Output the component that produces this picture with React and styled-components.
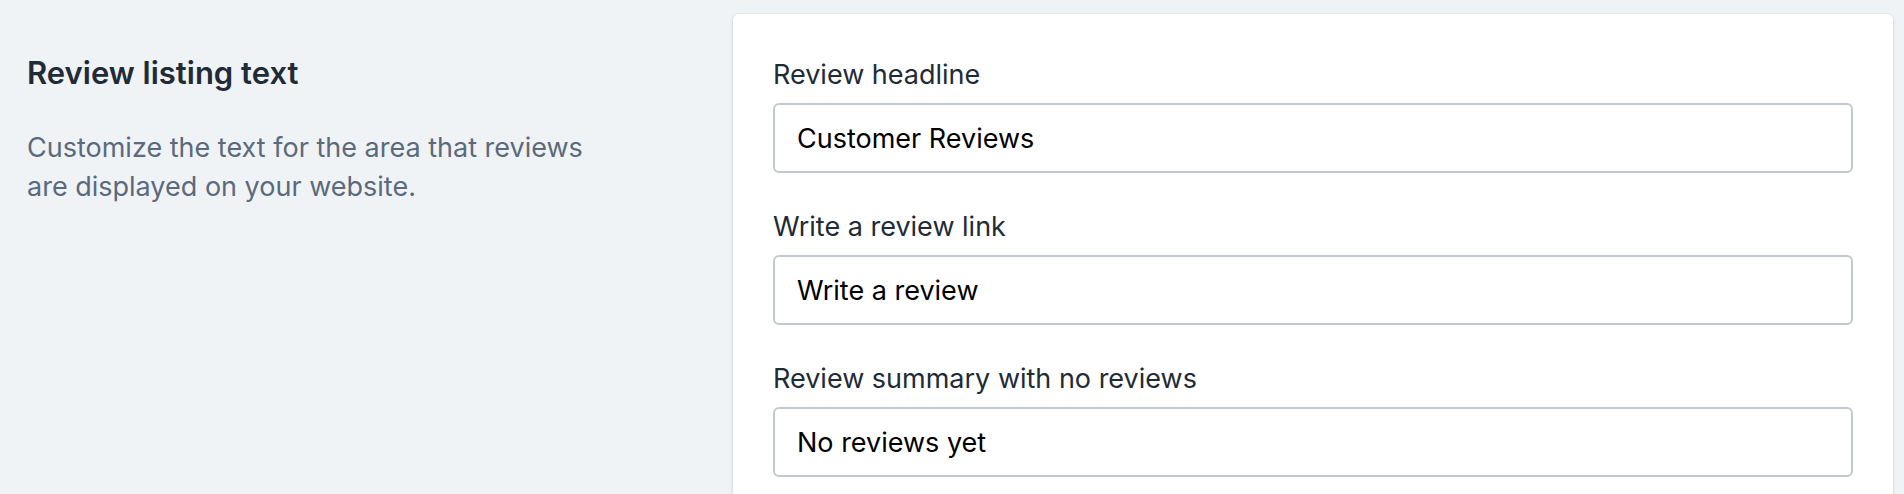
import styled, { createGlobalStyle } from "styled-components"

const GlobalStyle = createGlobalStyle`
  body {
    margin: 0;
    background: #f0f3f6;
    font-family: Inter, "Noto Sans", sans-serif;
    -webkit-font-smoothing: antialiased;
  }
`

const Page = styled.div`
  display: flex;
  align-items: flex-start;
  padding: 14px 11px 0 27px;
  height: 494px;
  box-sizing: border-box;
  overflow: hidden;
`

const Aside = styled.div`
  width: 706px;
  flex-shrink: 0;
  padding-top: 39px;
`

const Heading = styled.h2`
  margin: 0;
  font-size: 31px;
  line-height: 40px;
  font-weight: 600;
  color: #212b36;
`

const Description = styled.p`
  margin: 35px 0 0;
  width: 580px;
  font-size: 27px;
  line-height: 39px;
  color: #5a6a7c;
`

const Card = styled.div`
  flex: 1;
  background: #fff;
  border-radius: 6px;
  box-shadow: 0 0 0 1px rgba(63, 63, 68, 0.06), 0 2px 4px rgba(63, 63, 68, 0.12);
  padding: 43px 40px 0;
  min-height: 600px;
`

const Field = styled.div`
  display: flex;
  flex-direction: column;
  margin-bottom: 36px;
`

const Label = styled.label`
  font-size: 27px;
  line-height: 36px;
  color: #212b36;
  margin-bottom: 10px;
`

const Input = styled.input`
  box-sizing: border-box;
  height: 70px;
  width: 100%;
  padding: 0 22px;
  border: 2px solid #c2c9d0;
  border-radius: 6px;
  font-family: inherit;
  font-size: 27px;
  color: #000;
  background: #fff;
  outline: none;
`

const fields = [
  { label: "Review headline", value: "Customer Reviews" },
  { label: "Write a review link", value: "Write a review" },
  { label: "Review summary with no reviews", value: "No reviews yet" },
]

export default function App() {
  return (
    <>
      <GlobalStyle />
      <Page>
        <Aside>
          <Heading>Review listing text</Heading>
          <Description>
            Customize the text for the area that reviews are displayed on your
            website.
          </Description>
        </Aside>
        <Card>
          {fields.map((f) => (
            <Field key={f.label}>
              <Label>{f.label}</Label>
              <Input defaultValue={f.value} readOnly />
            </Field>
          ))}
        </Card>
      </Page>
    </>
  )
}
